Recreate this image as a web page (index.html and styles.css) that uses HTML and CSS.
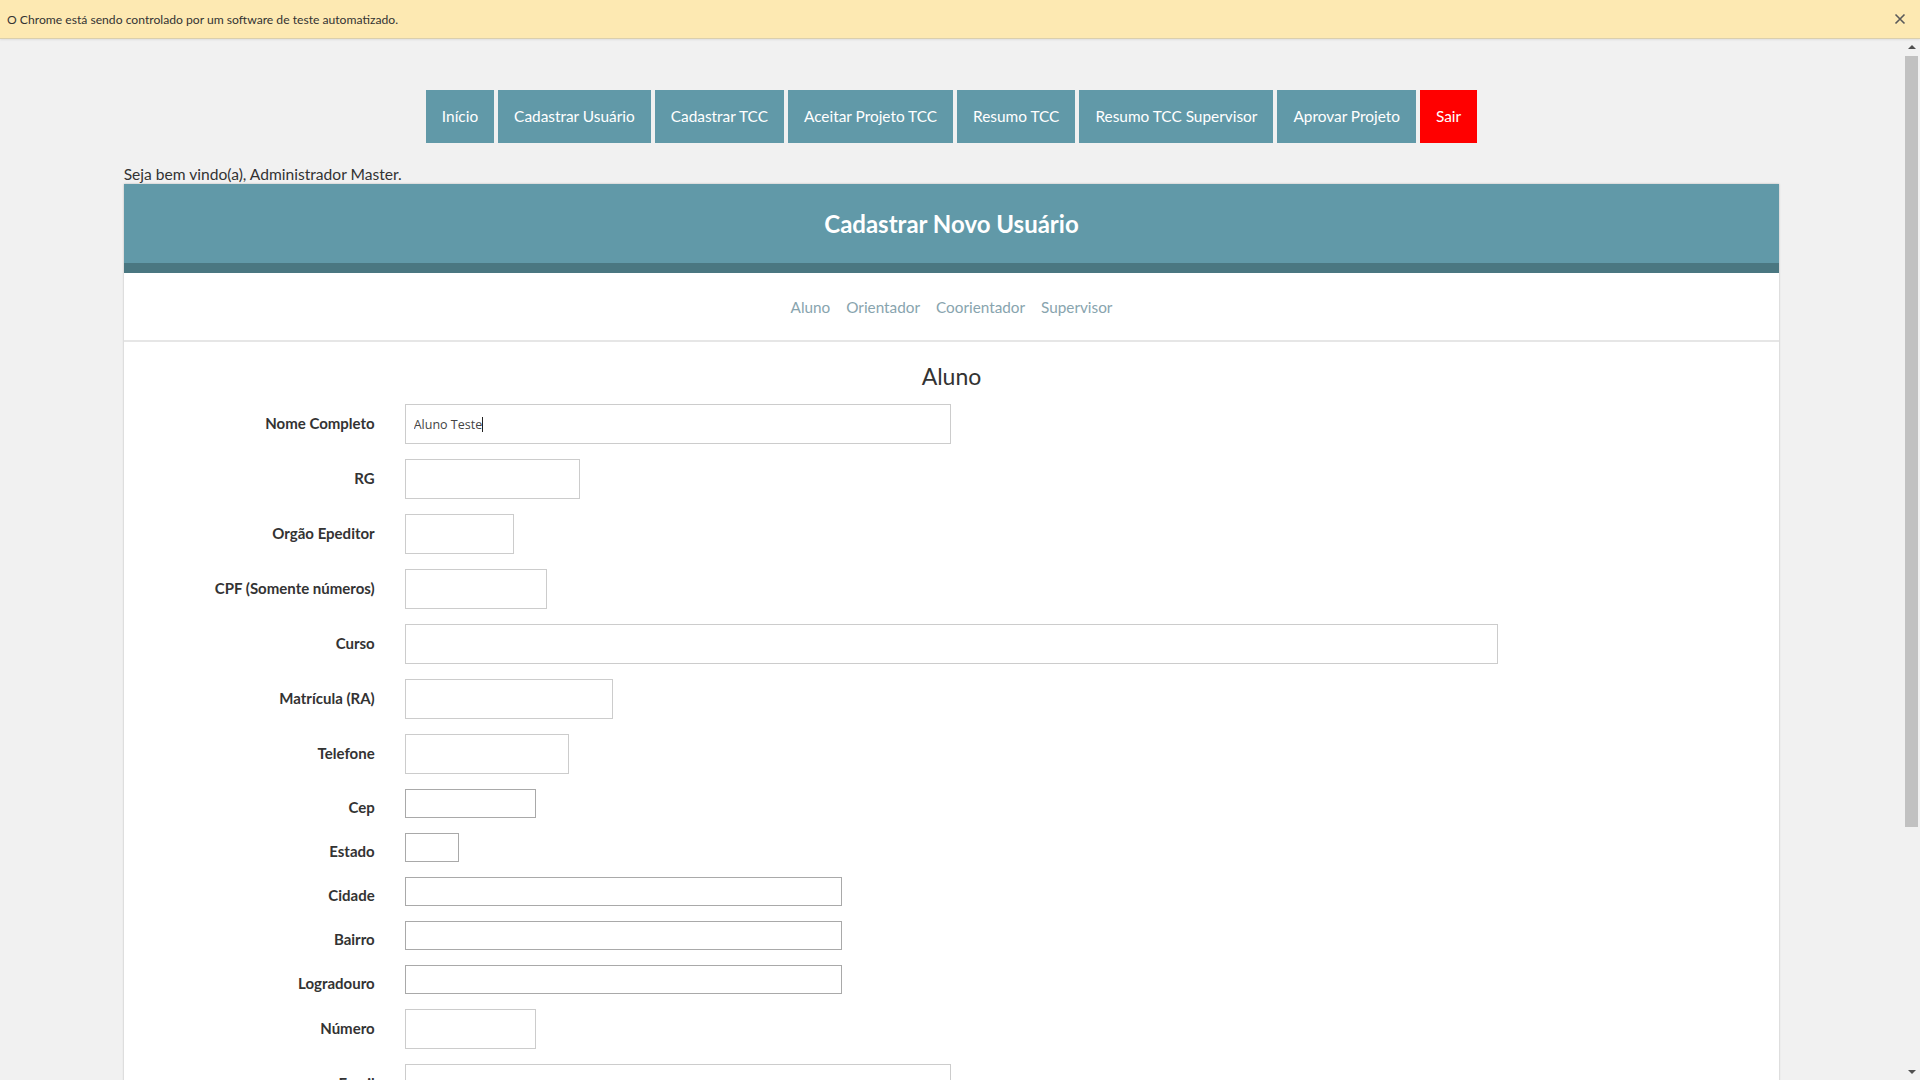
FILE: index.html
```html
<!DOCTYPE html>
<html lang="pt-BR">
<head>
<meta charset="utf-8">
<title>Cadastrar Usuário</title>
<link rel="stylesheet" href="styles.css">
</head>
<body>
<div class="infobar">
  <span class="infobar-text">O Chrome está sendo controlado por um software de teste automatizado.</span>
  <svg class="infobar-close" width="12" height="12" viewBox="0 0 12 12"><path d="M1.5 1.5 L10.5 10.5 M10.5 1.5 L1.5 10.5" stroke="#5a5a5a" stroke-width="1.6" fill="none"/></svg>
</div>
<div class="viewport">
  <div class="page">
    <nav class="menu">
      <a href="#">Início</a>
      <a href="#">Cadastrar Usuário</a>
      <a href="#">Cadastrar TCC</a>
      <a href="#">Aceitar Projeto TCC</a>
      <a href="#">Resumo TCC</a>
      <a href="#">Resumo TCC Supervisor</a>
      <a href="#">Aprovar Projeto</a>
      <a href="#" class="logout">Sair</a>
    </nav>
    <div class="container">
      <div class="welcome">Seja bem vindo(a), Administrador Master.</div>
      <div class="card">
        <div class="card-head"><h1>Cadastrar Novo Usuário</h1></div>
        <div class="tabs">
          <a href="#">Aluno</a>
          <a href="#">Orientador</a>
          <a href="#">Coorientador</a>
          <a href="#">Supervisor</a>
        </div>
        <h2 class="section-title">Aluno</h2>
        <form class="form">
          <div class="row"><label>Nome Completo</label><span class="field-wrap"><input class="field w-name value" type="text" value="Aluno Teste"><span class="caret"></span></span></div>
          <div class="row"><label>RG</label><input class="field w-rg" type="text"></div>
          <div class="row"><label>Orgão Epeditor</label><input class="field w-org" type="text"></div>
          <div class="row"><label>CPF (Somente números)</label><input class="field w-cpf" type="text"></div>
          <div class="row"><label>Curso</label><input class="field w-curso" type="text"></div>
          <div class="row"><label>Matrícula (RA)</label><input class="field w-ra" type="text"></div>
          <div class="row"><label>Telefone</label><input class="field w-tel" type="text"></div>
          <div class="row row-sm"><label>Cep</label><input class="field field-sm w-cep" type="text"></div>
          <div class="row row-sm"><label>Estado</label><input class="field field-sm w-uf" type="text"></div>
          <div class="row row-sm"><label>Cidade</label><input class="field field-sm w-addr" type="text"></div>
          <div class="row row-sm"><label>Bairro</label><input class="field field-sm w-addr" type="text"></div>
          <div class="row row-sm"><label>Logradouro</label><input class="field field-sm w-addr" type="text"></div>
          <div class="row"><label>Número</label><input class="field w-num" type="text"></div>
          <div class="row"><label>Email</label><input class="field w-name" type="text"></div>
          <div class="row"><label>Senha</label><input class="field w-rg" type="password"></div>
        </form>
      </div>
    </div>
  </div>
  <div class="scrollbar">
    <div class="sb-arrow sb-up"></div>
    <div class="sb-track"><div class="sb-thumb"></div></div>
    <div class="sb-arrow sb-down"></div>
  </div>
</div>
</body>
</html>
```
FILE: styles.css
```css
* { box-sizing: border-box; }
html, body { margin: 0; padding: 0; height: 100%; }
body {
  font-family: Lato, "Liberation Sans", sans-serif;
  background: #f1f1f1;
  color: #333;
  overflow: hidden;
}

.infobar {
  height: 39px;
  background: #fde9b2;
  border-bottom: 1px solid #dacfae;
  box-shadow: 0 1px 2px rgba(0,0,0,0.08);
  display: flex;
  align-items: center;
  justify-content: space-between;
  padding: 0 14px 0 7px;
  position: relative;
  z-index: 2;
}
.infobar-text { font-family: Lato, sans-serif; font-size: 12.15px; color: #333; }
.infobar-close { display: block; }

.viewport { display: flex; height: 1041px; }
.page { flex: 1; overflow: hidden; }

.menu {
  display: flex;
  justify-content: center;
  gap: 4px;
  margin-top: 51px;
}
.menu a {
  display: block;
  height: 53px;
  line-height: 53px;
  padding: 0 16px;
  background: #6199a8;
  color: #fff;
  font-size: 15.4px;
  text-decoration: none;
}
.menu a.logout { background: #ff0000; }

.container { width: 87%; margin: 0 auto; }
.welcome { margin-top: 21px; font-size: 15.6px; line-height: 20px; color: #333; }

.card {
  background: #fff;
  box-shadow: 0 0 2px rgba(0,0,0,0.25);
  min-height: 1200px;
}
.card-head {
  background: #6199a8;
  border-bottom: 10px solid #4a7781;
  height: 89px;
  display: flex;
  align-items: center;
  justify-content: center;
}
.card-head h1 { margin: 0; color: #fff; font-size: 24px; font-weight: 700; }

.tabs {
  height: 69px;
  border-bottom: 2px solid #e6e6e6;
  display: flex;
  justify-content: center;
  align-items: center;
  gap: 16px;
}
.tabs a { color: #88a4ae; font-size: 15.3px; text-decoration: none; }

.section-title {
  text-align: center;
  font-size: 23px;
  font-weight: 400;
  line-height: 26px;
  margin: 21px 0 15px;
  color: #333;
}

.form { display: flex; flex-direction: column; gap: 15px; }
.row { display: flex; align-items: center; gap: 30px; }
.row label {
  width: 251px;
  flex: none;
  text-align: right;
  font-weight: 700;
  font-size: 15px;
  color: #333;
  padding-bottom: 3px;
}
.row-sm label { padding: 7px 0 0; }

.field {
  display: block;
  height: 40px;
  border: 1px solid #cccccc;
  background: #fff;
  margin: 0;
  padding: 0 8px;
  font-family: "Open Sans", sans-serif;
  font-size: 12.5px;
  color: #444;
  outline: none;
}
.field-sm { height: 29px; border-color: #a9a9a9; }
.field-wrap { position: relative; display: block; }
.caret {
  position: absolute;
  left: 77px;
  top: 13px;
  width: 1px;
  height: 15px;
  background: #222;
}

.w-name { width: 546px; }
.w-rg { width: 175px; }
.w-org { width: 109px; }
.w-cpf { width: 142px; }
.w-curso { width: 1093px; }
.w-ra { width: 208px; }
.w-tel { width: 164px; }
.w-cep { width: 131px; }
.w-uf { width: 54px; }
.w-addr { width: 437px; }
.w-num { width: 131px; }

.scrollbar {
  width: 17px;
  flex: none;
  background: #f1f1f1;
  display: flex;
  flex-direction: column;
}
.sb-arrow { height: 17px; position: relative; }
.sb-arrow::after {
  content: "";
  position: absolute;
  left: 5px;
  border-left: 4px solid transparent;
  border-right: 4px solid transparent;
}
.sb-up::after { top: 6px; border-bottom: 4px solid #505050; }
.sb-down::after { top: 7px; border-top: 4px solid #505050; }
.sb-track { flex: 1; padding: 0 2px; }
.sb-thumb { height: 771px; background: #c1c1c1; }
```
